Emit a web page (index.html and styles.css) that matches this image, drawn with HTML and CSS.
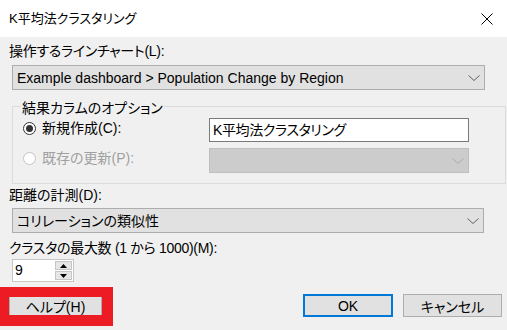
FILE: index.html
```html
<!DOCTYPE html>
<html lang="ja">
<head>
<meta charset="utf-8">
<title>K平均法クラスタリング</title>
<link rel="stylesheet" href="styles.css">
</head>
<body>
<div class="dialog">
  <header class="titlebar">
    <span class="title">K平均法クラスタリング</span>
    <svg class="close" width="12" height="12" viewBox="0 0 12 12"><path d="M0.5 0.5L11.5 11.5M11.5 0.5L0.5 11.5" stroke="#000" stroke-width="1" fill="none"/></svg>
  </header>
  <main class="content">
    <div class="label first">操作するラインチャート(L):</div>
    <div class="combo wide">
      <span class="combo-text">Example dashboard &gt; Population Change by Region</span>
      <svg class="chev" width="12" height="6" viewBox="0 0 12 6"><path d="M0.5 0.5L6 5.5L11.5 0.5" fill="none" stroke="#606060" stroke-width="1"/></svg>
    </div>
    <fieldset class="group">
      <legend>結果カラムのオプション</legend>
      <div class="grid">
        <div class="radio-row"><span class="radio checked"></span><span>新規作成(C):</span></div>
        <div class="textbox">K平均法クラスタリング</div>
        <div class="radio-row disabled"><span class="radio"></span><span>既存の更新(P):</span></div>
        <div class="combo disabled">
          <span></span>
          <svg class="chev" width="12" height="6" viewBox="0 0 12 6"><path d="M0.5 0.5L6 5.5L11.5 0.5" fill="none" stroke="#ababab" stroke-width="1"/></svg>
        </div>
      </div>
    </fieldset>
    <div class="label second">距離の計測(D):</div>
    <div class="combo metric">
      <span class="combo-text">コリレーションの類似性</span>
      <svg class="chev" width="12" height="6" viewBox="0 0 12 6"><path d="M0.5 0.5L6 5.5L11.5 0.5" fill="none" stroke="#606060" stroke-width="1"/></svg>
    </div>
    <div class="label third">クラスタの最大数 (1 から 1000)(M):</div>
    <div class="spinner">
      <span class="spin-value">9</span>
      <div class="spin-buttons">
        <span class="spin"><svg width="7" height="4" viewBox="0 0 7 4"><path d="M0 4L3.5 0L7 4Z" fill="#000"/></svg></span>
        <span class="spin"><svg width="7" height="4" viewBox="0 0 7 4"><path d="M0 0L3.5 4L7 0Z" fill="#000"/></svg></span>
      </div>
    </div>
    <div class="buttons">
      <span class="btn help">ヘルプ(H)</span>
      <span class="btn ok">OK</span>
      <span class="btn cancel">キャンセル</span>
    </div>
  </main>
  <div class="highlight"></div>
</div>
</body>
</html>
```
FILE: styles.css
```css
* { box-sizing: border-box; }
html, body { margin: 0; padding: 0; }
body {
  width: 507px;
  height: 330px;
  overflow: hidden;
  background: #f0f0f0;
  font-family: "Liberation Sans", "Noto Sans CJK JP", sans-serif;
  font-size: 14px;
  color: #000;
  font-feature-settings: "palt";
}
.dialog { position: relative; width: 507px; height: 330px; }
.titlebar {
  height: 37px;
  background: #fff;
  display: flex;
  align-items: center;
  justify-content: space-between;
  padding: 0 14px 0 9px;
}
.title { font-size: 13px; line-height: 16px; white-space: nowrap; }
.close { display: block; }
.content {
  padding-left: 12px;
  display: flex;
  flex-direction: column;
  align-items: flex-start;
}
.label { height: 16px; line-height: 16px; white-space: nowrap; margin-left: -3px; letter-spacing: -0.3px; }
.label.first { margin-top: 6px; }
.label.second { margin-top: 3px; letter-spacing: 0; }
.label.third { margin-top: 7px; }
.combo {
  display: flex;
  align-items: center;
  justify-content: space-between;
  height: 25px;
  background: #e1e1e1;
  border: 1px solid #adadad;
  padding: 0 4px 0 4px;
}
.combo.wide { width: 473px; margin-top: 6px; }
.combo.metric { width: 472px; margin-top: 5px; }
.combo-text { line-height: 16px; white-space: nowrap; }
.chev { display: block; }
.combo.disabled { background: #cccccc; border-color: #bfbfbf; height: 25px; width: 260px; }
.group {
  margin: 6px 0 0 0;
  width: 494px;
  border: 1px solid #dcdcdc;
  padding: 0 0 10px 0;
  min-inline-size: auto;
}
.group legend {
  margin-left: 8px;
  padding: 4px 1px 0 1px;
  line-height: 16px;
}
.grid {
  display: grid;
  grid-template-columns: 196px 260px;
  row-gap: 6px;
  margin-top: 2px;
  align-items: center;
}
.radio-row {
  display: flex;
  align-items: center;
  gap: 6px;
  padding-left: 10px;
  white-space: nowrap;
  line-height: 16px;
  align-self: start;
  margin-top: 2px;
}
.radio {
  width: 13px;
  height: 13px;
  border-radius: 50%;
  border: 1px solid #333;
  background: #fff;
  display: flex;
  align-items: center;
  justify-content: center;
}
.radio.checked::after {
  content: "";
  width: 7px;
  height: 7px;
  border-radius: 50%;
  background: #333;
}
.radio-row.disabled { color: #a0a0a0; }
.radio-row.disabled .radio { border-color: #c4c4c4; }
.textbox {
  height: 24px;
  width: 260px;
  background: #fff;
  border: 1px solid #7a7a7a;
  padding-left: 3px;
  line-height: 22px;
  white-space: nowrap;
  letter-spacing: -0.4px;
}
.spinner {
  margin-top: 3px;
  width: 62px;
  height: 23px;
  background: #fff;
  border: 1px solid #c6c6c6;
  display: flex;
  justify-content: space-between;
}
.spin-value { padding-left: 2px; line-height: 21px; }
.spin-buttons { width: 18px; display: flex; flex-direction: column; padding: 1px 1px 1px 0; gap: 1px; }
.spin {
  flex: 1;
  background: #e6e6e6;
  border: 1px solid #c6c6c6;
  display: flex;
  align-items: center;
  justify-content: center;
}
.spin svg { display: block; }
.buttons {
  margin-top: 12px;
  margin-left: -3px;
  width: 498px;
  padding-right: 5px;
  display: flex;
  gap: 10px;
}
.btn {
  height: 23px;
  display: flex;
  align-items: center;
  justify-content: center;
  background: #e1e1e1;
  border: 1px solid #adadad;
  white-space: nowrap;
}
.btn.help { width: 93px; }
.btn.ok { width: 90px; margin-left: auto; border: 2px solid #0078d7; }
.btn.cancel { width: 99px; }
.highlight {
  position: absolute;
  left: 0;
  top: 287px;
  width: 113px;
  height: 39px;
  border-style: solid;
  border-color: #ed1c24;
  border-width: 10px 11px 11px 9px;
}
```
